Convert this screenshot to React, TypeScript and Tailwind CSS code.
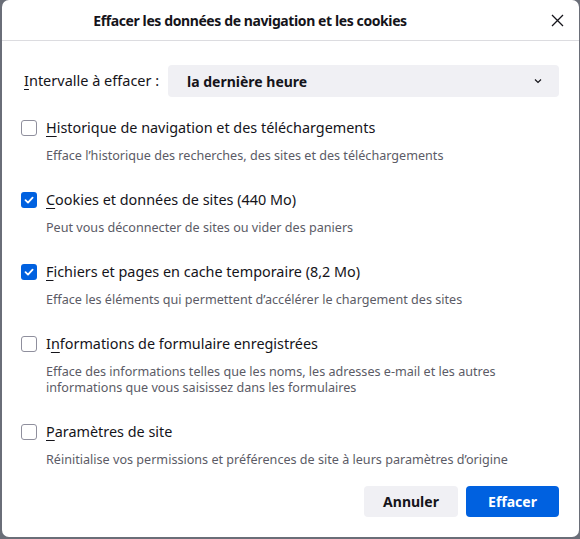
import React from "react"

const font = { fontFamily: '"Noto Sans", "Open Sans", sans-serif' }

type Item = {
    label: string
    key: number
    desc: string[]
    checked: boolean
}

const items: Item[] = [
    {
        label: "Historique de navigation et des téléchargements",
        key: 0,
        desc: ["Efface l’historique des recherches, des sites et des téléchargements"],
        checked: false,
    },
    {
        label: "Cookies et données de sites (440 Mo)",
        key: 0,
        desc: ["Peut vous déconnecter de sites ou vider des paniers"],
        checked: true,
    },
    {
        label: "Fichiers et pages en cache temporaire (8,2 Mo)",
        key: 0,
        desc: ["Efface les éléments qui permettent d’accélérer le chargement des sites"],
        checked: true,
    },
    {
        label: "Informations de formulaire enregistrées",
        key: 1,
        desc: [
            "Efface des informations telles que les noms, les adresses e-mail et les autres",
            "informations que vous saisissez dans les formulaires",
        ],
        checked: false,
    },
    {
        label: "Paramètres de site",
        key: 0,
        desc: ["Réinitialise vos permissions et préférences de site à leurs paramètres d’origine"],
        checked: false,
    },
]

const AccessLabel = ({ text, at }: { text: string; at: number }) => (
    <span>
        {text.slice(0, at)}
        <span className="underline underline-offset-[3px] decoration-1">{text[at]}</span>
        {text.slice(at + 1)}
    </span>
)

const Checkbox = ({ checked }: { checked: boolean }) =>
    checked ? (
        <div className="w-4 h-4 rounded-[3px] bg-[#0061e0] flex items-center justify-center shrink-0">
            <svg width="12" height="12" viewBox="0 0 12 12" fill="none">
                <path d="M2.5 6.2 L5 8.6 L9.6 3.6" stroke="white" strokeWidth="1.8" strokeLinecap="round" strokeLinejoin="round" />
            </svg>
        </div>
    ) : (
        <div className="w-4 h-4 rounded-[3px] border border-[#8f8f9d] bg-white shrink-0" />
    )

export default function App() {
    return (
        <div className="w-[580px] h-[539px] bg-[#6a6e78] overflow-hidden" style={font}>
            <div className="ml-[2px] w-[577px] h-[537px] bg-white rounded-[7px] flex flex-col text-[#15141a]">
                <div className="h-[41px] border-b border-[#dcdce0] flex items-center relative shrink-0">
                    <div className="w-[496px] text-center text-[14px] font-bold tracking-[-0.4px]">
                        Effacer les données de navigation et les cookies
                    </div>
                    <svg className="absolute right-[15px] top-[14px]" width="13" height="13" viewBox="0 0 13 13">
                        <path d="M1 1 L12 12 M12 1 L1 12" stroke="#15141a" strokeWidth="1.3" />
                    </svg>
                </div>
                <div className="flex flex-col pl-[18px] pr-[20px]">
                    <div className="mt-[24px] flex items-center h-[32px]">
                        <div className="pl-[4px] w-[148px] shrink-0 text-[14.5px]">
                            <AccessLabel text="Intervalle à effacer :" at={0} />
                        </div>
                        <div className="flex-1 h-[32px] rounded-[4px] bg-[#f0f0f4] flex items-center justify-between pl-[19px] pr-[16px]">
                            <span className="text-[14px] font-bold">la dernière heure</span>
                            <svg width="10" height="10" viewBox="0 0 10 10">
                                <path d="M2 3.5 L5 6.5 L8 3.5" stroke="#15141a" strokeWidth="1.2" fill="none" />
                            </svg>
                        </div>
                    </div>
                    <div className="flex flex-col mt-[21px] gap-[26px]">
                        {items.map((item, i) => (
                            <div key={i} className="flex flex-col">
                                <div className="flex items-center h-[20px] gap-[9px]">
                                    <div className="pl-[1px]">
                                        <Checkbox checked={item.checked} />
                                    </div>
                                    <span className="text-[14.4px] leading-[20px]">
                                        <AccessLabel text={item.label} at={item.key} />
                                    </span>
                                </div>
                                <div className="mt-[10px] pl-[26px] text-[12.6px] leading-[16px] text-[#5b5b66]">
                                    {item.desc.map((d, j) => (
                                        <div key={j}>{d}</div>
                                    ))}
                                </div>
                            </div>
                        ))}
                    </div>
                    <div className="mt-[18px] flex justify-end gap-[8px]">
                        <button className="w-[94px] h-[31px] rounded-[4px] bg-[#f0f0f4] text-[14px] font-bold text-[#15141a]">
                            Annuler
                        </button>
                        <button className="w-[93px] h-[31px] rounded-[4px] bg-[#0061e0] text-[14px] font-bold text-white">
                            Effacer
                        </button>
                    </div>
                </div>
            </div>
        </div>
    )
}
